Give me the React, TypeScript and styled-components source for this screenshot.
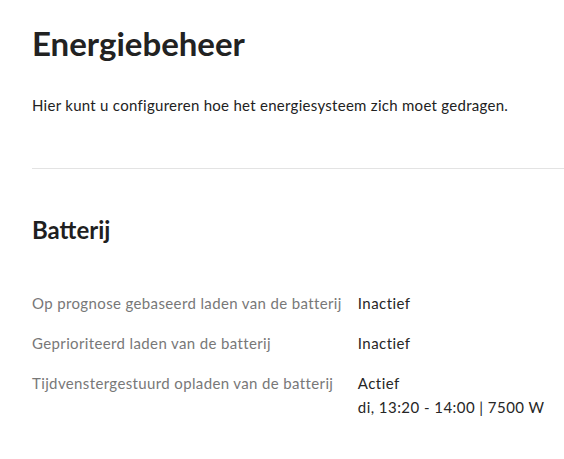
import React from 'react'
import styled, { createGlobalStyle } from 'styled-components'

const GlobalStyle = createGlobalStyle`
  html, body {
    margin: 0;
    padding: 0;
    background: #fff;
  }
  body {
    font-family: Lato, "Noto Sans", sans-serif;
    color: #1f1f1f;
  }
`

const rows = [
  { label: 'Op prognose gebaseerd laden van de batterij', value: ['Inactief'] },
  { label: 'Geprioriteerd laden van de batterij', value: ['Inactief'] },
  { label: 'Tijdvenstergestuurd opladen van de batterij', value: ['Actief', 'di, 13:20 - 14:00 | 7500 W'] },
]

function App() {
  return (
    <Page>
      <GlobalStyle />
      <Intro>
        <Title>Energiebeheer</Title>
        <Lead>Hier kunt u configureren hoe het energiesysteem zich moet gedragen.</Lead>
      </Intro>
      <Divider />
      <Section>
        <SectionTitle>Batterij</SectionTitle>
        <SettingsList>
          {rows.map((row) => (
            <SettingRow key={row.label}>
              <Label>{row.label}</Label>
              <Value>
                {row.value.map((line) => (
                  <div key={line}>{line}</div>
                ))}
              </Value>
            </SettingRow>
          ))}
        </SettingsList>
      </Section>
    </Page>
  )
}

export default App

const Page = styled.div`
  padding-left: 32px;
`

const Intro = styled.div`
  padding-top: 21px;
  padding-bottom: 52px;
`

const Title = styled.h1`
  margin: 0;
  font-size: 33px;
  line-height: 44px;
  font-weight: 700;
  color: #222;
`

const Lead = styled.p`
  margin: 29px 0 0;
  font-size: 15px;
  line-height: 22px;
  letter-spacing: 0.28px;
  color: #222;
`

const Divider = styled.hr`
  margin: 0;
  border: 0;
  border-top: 1px solid #e3e3e3;
`

const Section = styled.div`
  padding-top: 45px;
`

const SectionTitle = styled.h2`
  margin: 0;
  font-size: 24px;
  line-height: 32px;
  font-weight: 700;
  color: #1f1f1f;
`

const SettingsList = styled.div`
  margin-top: 45px;
  display: grid;
  grid-template-columns: auto 1fr;
  row-gap: 16px;
  column-gap: 16px;
`

const SettingRow = styled.div`
  display: contents;
`

const Label = styled.div`
  font-size: 15px;
  line-height: 24px;
  letter-spacing: 0.37px;
  color: #787878;
`

const Value = styled.div`
  font-size: 15px;
  line-height: 24px;
  letter-spacing: 0.45px;
  color: #262626;
`
